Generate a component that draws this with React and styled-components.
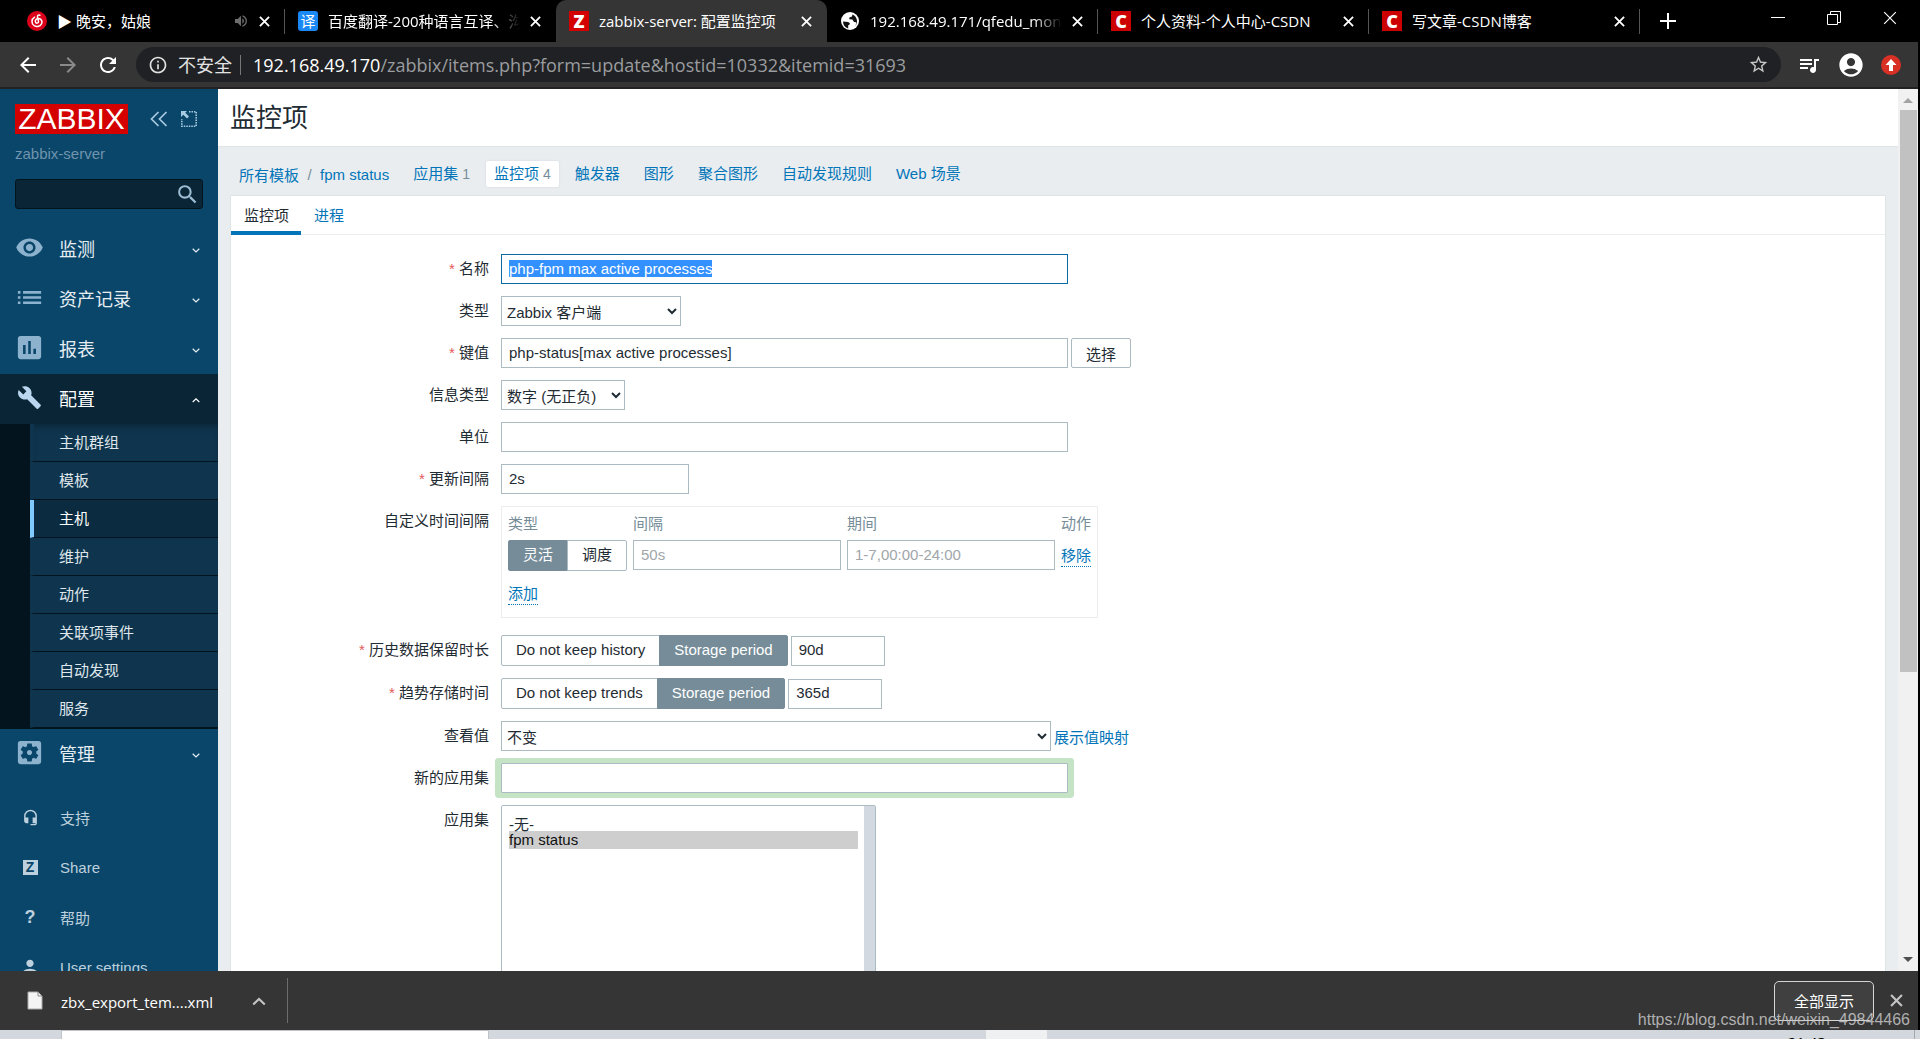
import React, { useEffect, useRef } from 'react';
import styled, { createGlobalStyle, css } from 'styled-components';
import {
  MdArrowBack,
  MdArrowForward,
  MdRefresh,
  MdInfoOutline,
  MdStarBorder,
  MdQueueMusic,
  MdAccountCircle,
  MdVolumeUp,
  MdSearch,
  MdVisibility,
  MdList,
  MdInsertChart,
  MdBuild,
  MdSettingsApplications,
  MdHeadsetMic,
  MdPerson,
} from 'react-icons/md';

const browserFont = "'Open Sans', 'Noto Sans CJK SC', sans-serif";
const pageFont = "'Liberation Sans', 'Noto Sans CJK SC', sans-serif";

const tabs = [
  { icon: 'music', title: '▶ 晚安，姑娘', muted: true, line: true },
  { icon: 'fanyi', title: '百度翻译-200种语言互译、沟', fade: true },
  { icon: 'zabbix', title: 'zabbix-server: 配置监控项', active: true },
  { icon: 'globe', title: '192.168.49.171/qfedu_mon', fade: true, line: true },
  { icon: 'csdn', title: '个人资料-个人中心-CSDN', line: true },
  { icon: 'csdn', title: '写文章-CSDN博客', line: true },
];

const subMenu = ['主机群组', '模板', '主机', '维护', '动作', '关联项事件', '自动发现', '服务'];

const crumbs = [
  { text: '应用集', count: 1 },
  { text: '监控项', count: 4, active: true },
  { text: '触发器' },
  { text: '图形' },
  { text: '聚合图形' },
  { text: '自动发现规则' },
  { text: 'Web 场景' },
];

const Cross = ({ size = 11, width = 2 }) => (
  <svg width={size} height={size} viewBox="0 0 12 12" fill="none" stroke="currentColor" strokeWidth={width}>
    <path d="M1 1L11 11M11 1L1 11" />
  </svg>
);

const Chevron = ({ up, size = 8, width = 1.2 }) => (
  <svg width={size} height={size} viewBox="0 0 8 8" fill="none" stroke="currentColor" strokeWidth={width}>
    <path d={up ? 'M0.7 6L4 2.8L7.3 6' : 'M0.7 2.8L4 6L7.3 2.8'} />
  </svg>
);

const Favicon = ({ name }) => {
  if (name === 'music') {
    return (
      <svg width="20" height="20" viewBox="0 0 20 20">
        <circle cx="10" cy="10" r="10" fill="#dd001b" />
        <path
          d="M13 4.2C11.2 3.4 10.2 4.6 10.5 6.2L11.5 10.4C11.9 12.4 8.6 12.9 8.3 10.7C8.1 8.7 9.8 7.6 11.5 7.6C14.3 7.8 15.6 10.2 14.7 12.5C13.6 15.3 9.9 16.3 7.2 14.7C4.2 12.8 4.1 8.2 7.6 6.2"
          fill="none"
          stroke="#fff"
          strokeWidth="1.5"
          strokeLinecap="round"
        />
      </svg>
    );
  }
  if (name === 'globe') {
    return (
      <svg width="20" height="20" viewBox="0 0 20 20">
        <circle cx="10" cy="10" r="9" fill="#fff" />
        <path
          d="M3 10.5L8 11C9.5 11.5 10.3 12.4 9.6 13.6L8.2 14.2V17.4C5 16.6 3 14 3 10.5ZM10 3L12.5 3.4L12 5.6L9.4 6.6L9.2 8.2L12.4 8.6L14 11L16.2 11.2C16.6 13.4 15 15.6 13.6 16.2C16 14.8 17.2 12.4 17 9.8C16.8 6 13.8 3 10 3Z"
          fill="#111"
        />
      </svg>
    );
  }
  if (name === 'fanyi') return <Badge $bg="#1a88f5" $round>译</Badge>;
  if (name === 'zabbix') return <Badge $bg="#d40000" $bold>Z</Badge>;
  return <Badge $bg="#cc0000" $bold>C</Badge>;
};

const BrowserTop = () => (
  <header>
    <TabStrip>
      {tabs.map((tab) => (
        <Tab key={tab.title} $active={tab.active} $line={tab.line}>
          <Favicon name={tab.icon} />
          <TabTitle $fade={tab.fade}>{tab.title}</TabTitle>
          {tab.muted && <MdVolumeUp size={16} color="#6d6d6d" />}
          <PlainButton aria-label="关闭标签页">
            <Cross />
          </PlainButton>
        </Tab>
      ))}
      <NewTab aria-label="新标签页">
        <svg width="16" height="16" viewBox="0 0 16 16" stroke="#fff" strokeWidth="2">
          <path d="M8 0V16M0 8H16" />
        </svg>
      </NewTab>
      <WindowButtons>
        <PlainButton aria-label="最小化">
          <svg width="14" height="14" stroke="#fff">
            <path d="M0 6.5H14" />
          </svg>
        </PlainButton>
        <PlainButton aria-label="还原">
          <svg width="14" height="14" fill="none" stroke="#fff">
            <path d="M0.5 3.5H10.5V13.5H0.5ZM3.5 3V0.5H13.5V11.5H11" />
          </svg>
        </PlainButton>
        <PlainButton aria-label="关闭">
          <Cross size={14} width={1} />
        </PlainButton>
      </WindowButtons>
    </TabStrip>
    <Toolbar>
      <PlainButton aria-label="后退">
        <MdArrowBack size={24} />
      </PlainButton>
      <PlainButton aria-label="前进" $dim>
        <MdArrowForward size={24} />
      </PlainButton>
      <PlainButton aria-label="刷新">
        <MdRefresh size={24} />
      </PlainButton>
      <Omnibox>
        <MdInfoOutline size={20} />
        <Insecure>不安全</Insecure>
        <Url>
          <b>192.168.49.170</b>/zabbix/items.php?form=update&amp;hostid=10332&amp;itemid=31693
        </Url>
        <MdStarBorder size={21} color="#c8c8c8" />
      </Omnibox>
      <PlainButton aria-label="媒体控制">
        <MdQueueMusic size={24} />
      </PlainButton>
      <PlainButton aria-label="用户">
        <MdAccountCircle size={28} />
      </PlainButton>
      <UpdateButton aria-label="更新">
        <svg width="12" height="12" viewBox="0 0 12 12">
          <path d="M6 0L11.5 6H8V12H4V6H0.5Z" fill="#fff" />
        </svg>
      </UpdateButton>
    </Toolbar>
  </header>
);

const MenuRow = ({ icon, text, open }) => (
  <MenuLink href="#" $open={open}>
    <IconCell>{icon}</IconCell>
    <span>{text}</span>
    <Chevron up={open} />
  </MenuLink>
);

const Sidebar = () => (
  <Side>
    <SideHead>
      <LogoRow>
        <Logo href="#">ZABBIX</Logo>
        <SideButton aria-label="收起侧栏">
          <svg width="18" height="16" viewBox="0 0 18 16" fill="none" stroke="currentColor" strokeWidth="1.7">
            <path d="M8.5 1L1.5 8L8.5 15M16.5 1L9.5 8L16.5 15" />
          </svg>
        </SideButton>
        <SideButton aria-label="隐藏侧栏">
          <svg width="16" height="16" viewBox="0 0 16 16">
            <path d="M8 .8H15.2V15.2H.8V8" fill="none" stroke="currentColor" strokeWidth="1.6" strokeDasharray="1.5 1" />
            <path d="M0 0H6L4.3 1.8L8 5.5L6 7.4L2.3 3.7L0 6Z" fill="currentColor" />
          </svg>
        </SideButton>
      </LogoRow>
      <ServerName>zabbix-server</ServerName>
      <SearchBox>
        <input type="search" aria-label="搜索" />
        <MdSearch size={25} />
      </SearchBox>
    </SideHead>
    <nav>
      <MenuRow icon={<MdVisibility size={29} />} text="监测" />
      <MenuRow icon={<MdList size={31} />} text="资产记录" />
      <MenuRow icon={<MdInsertChart size={31} />} text="报表" />
      <MenuRow icon={<MdBuild size={25} />} text="配置" open />
      <SubMenu>
        {subMenu.map((item) => (
          <SubLink key={item} href="#" $active={item === '主机'}>
            {item}
          </SubLink>
        ))}
      </SubMenu>
      <MenuRow icon={<MdSettingsApplications size={31} />} text="管理" />
    </nav>
    <UserMenu>
      <UserLink href="#">
        <IconCell><MdHeadsetMic size={17} /></IconCell>支持
      </UserLink>
      <UserLink href="#">
        <IconCell><ShareMark>Z</ShareMark></IconCell>Share
      </UserLink>
      <UserLink href="#">
        <IconCell><HelpMark>?</HelpMark></IconCell>帮助
      </UserLink>
      <UserLink href="#">
        <IconCell><MdPerson size={22} /></IconCell>User settings
      </UserLink>
    </UserMenu>
  </Side>
);

const Field = ({ id, label, required, tall, children }) => (
  <>
    <Label htmlFor={id} $required={required}>
      {label}
    </Label>
    <Control $tall={tall}>{children}</Control>
  </>
);

const Segment = ({ name, options, checked, firstId }) => (
  <SegmentBox>
    {options.map((option, i) => (
      <label key={option}>
        <input type="radio" id={i === 0 ? firstId : undefined} name={name} defaultChecked={option === checked} />
        <span>{option}</span>
      </label>
    ))}
  </SegmentBox>
);

const ItemForm = () => {
  const nameRef = useRef(null);

  useEffect(() => {
    nameRef.current.focus();
    nameRef.current.select();
  }, []);

  return (
    <Form>
      <Field id="name" label="名称" required>
        <Input id="name" ref={nameRef} $width={567} defaultValue="php-fpm max active processes" />
      </Field>
      <Field id="type" label="类型">
        <Select id="type" $width={180}>
          <option>Zabbix 客户端</option>
        </Select>
      </Field>
      <Field id="key" label="键值" required>
        <Input id="key" $width={567} defaultValue="php-status[max active processes]" />
        <PickButton type="button">选择</PickButton>
      </Field>
      <Field id="value_type" label="信息类型">
        <Select id="value_type" $width={124}>
          <option>数字 (无正负)</option>
        </Select>
      </Field>
      <Field id="units" label="单位">
        <Input id="units" $width={567} />
      </Field>
      <Field id="delay" label="更新间隔" required>
        <Input id="delay" $width={188} defaultValue="2s" />
      </Field>
      <Field id="flex_type" label="自定义时间间隔">
        <IntervalTable>
          <thead>
            <tr>
              <th>类型</th>
              <th>间隔</th>
              <th>期间</th>
              <th>动作</th>
            </tr>
          </thead>
          <tbody>
            <tr>
              <td>
                <Segment name="flex" firstId="flex_type" options={['灵活', '调度']} checked="灵活" />
              </td>
              <td>
                <Input $width={208} placeholder="50s" aria-label="间隔" />
              </td>
              <td>
                <Input $width={208} placeholder="1-7,00:00-24:00" aria-label="期间" />
              </td>
              <td>
                <DottedButton type="button">移除</DottedButton>
              </td>
            </tr>
            <tr>
              <td colSpan={4}>
                <DottedButton type="button">添加</DottedButton>
              </td>
            </tr>
          </tbody>
        </IntervalTable>
      </Field>
      <Field id="history_mode" label="历史数据保留时长" required tall>
        <Segment
          name="history"
          firstId="history_mode"
          options={['Do not keep history', 'Storage period']}
          checked="Storage period"
        />
        <Input $width={94} defaultValue="90d" aria-label="历史数据保留时长" />
      </Field>
      <Field id="trends_mode" label="趋势存储时间" required tall>
        <Segment
          name="trends"
          firstId="trends_mode"
          options={['Do not keep trends', 'Storage period']}
          checked="Storage period"
        />
        <Input $width={94} defaultValue="365d" aria-label="趋势存储时间" />
      </Field>
      <Field id="valuemap" label="查看值">
        <Select id="valuemap" $width={550}>
          <option>不变</option>
        </Select>
        <a href="#">展示值映射</a>
      </Field>
      <Field id="new_app" label="新的应用集">
        <Input id="new_app" $width={567} $halo />
      </Field>
      <Field id="apps" label="应用集">
        <ListFrame>
          <select id="apps" multiple defaultValue={['fpm']}>
            <option value="none">-无-</option>
            <option value="fpm">fpm status</option>
          </select>
          <ListTrack />
        </ListFrame>
      </Field>
    </Form>
  );
};

const DownloadBar = () => (
  <Downloads>
    <FileItem>
      <svg width="16" height="20" viewBox="0 0 16 20">
        <path d="M1 1H11L15 5V18H1Z" fill="#f4f4f4" stroke="#a9a9a9" />
        <path d="M11 1V5H15" fill="none" stroke="#8a8a8a" />
      </svg>
      <span>zbx_export_tem....xml</span>
      <PlainButton aria-label="更多操作" $dim="#c4c4c4">
        <Chevron up size={14} />
      </PlainButton>
    </FileItem>
    <ShowAll>全部显示</ShowAll>
    <PlainButton aria-label="关闭下载栏" $dim="#c4c4c4">
      <Cross size={13} />
    </PlainButton>
    <Watermark>https://blog.csdn.net/weixin_49844466</Watermark>
  </Downloads>
);

const App = () => (
  <Screen>
    <GlobalStyle />
    <BrowserTop />
    <Viewport>
      <Sidebar />
      <Main>
        <PageHead>
          <h1>监控项</h1>
        </PageHead>
        <Content>
          <Crumbs>
            <a href="#">所有模板</a>
            <i>/</i>
            <a href="#">fpm status</a>
            <CrumbList>
              {crumbs.map((item) => (
                <Crumb key={item.text} $active={item.active}>
                  <a href="#">{item.text}</a>
                  {item.count && <sup>{item.count}</sup>}
                </Crumb>
              ))}
            </CrumbList>
          </Crumbs>
          <Card>
            <CardTabs>
              <CardTab href="#" $active>监控项</CardTab>
              <CardTab href="#">进程</CardTab>
            </CardTabs>
            <ItemForm />
          </Card>
        </Content>
      </Main>
      <ScrollBar>
        <svg width="10" height="5"><path d="M5 0L10 5H0Z" fill="#a3a3a3" /></svg>
        <ScrollThumb />
        <svg width="10" height="5"><path d="M0 0H10L5 5Z" fill="#505050" /></svg>
      </ScrollBar>
    </Viewport>
    <DownloadBar />
    <Taskbar>
      <TaskSearch />
      <TaskActive />
      <Clock>21:43</Clock>
    </Taskbar>
  </Screen>
);

const GlobalStyle = createGlobalStyle`
  * {
    box-sizing: border-box;
  }
  body {
    margin: 0;
    background: #000;
  }
  button, input, select {
    font: inherit;
    color: inherit;
    margin: 0;
  }
  a {
    text-decoration: none;
    color: #0275b8;
  }
  svg {
    display: block;
    flex: none;
  }
`;

const Screen = styled.div`
  height: 100vh;
  display: flex;
  flex-direction: column;
  overflow: hidden;
  font-family: ${browserFont};
`;

const PlainButton = styled.button`
  display: flex;
  padding: 0;
  border: 0;
  background: none;
  color: ${({ $dim }) => ($dim ? ($dim === true ? '#8a8a8a' : $dim) : '#fff')};
`;

const TabStrip = styled.div`
  display: flex;
  align-items: center;
  height: 42px;
  padding-left: 14px;
  background: #000;
  color: #fff;
  font-size: 15px;
`;

const Tab = styled.div`
  position: relative;
  flex: 0 1 271px;
  min-width: 0;
  height: 42px;
  display: flex;
  align-items: center;
  gap: 10px;
  padding: 0 15px 0 13px;
  ${({ $active }) =>
    $active &&
    css`
      background: #353535;
      border-radius: 10px 10px 0 0;
    `}
  ${({ $line }) =>
    $line &&
    css`
      &::after {
        content: '';
        position: absolute;
        right: 0;
        top: 9px;
        width: 1px;
        height: 25px;
        background: #555;
      }
    `}
`;

const TabTitle = styled.span`
  flex: 1;
  min-width: 0;
  overflow: hidden;
  white-space: nowrap;
  line-height: 24px;
  ${({ $fade }) => $fade && 'mask-image: linear-gradient(to right, #000 85%, transparent);'}
`;

const Badge = styled.span`
  flex: none;
  width: 20px;
  height: 20px;
  display: flex;
  align-items: center;
  justify-content: center;
  background: ${({ $bg }) => $bg};
  border-radius: ${({ $round }) => ($round ? '3px' : '0')};
  color: #fff;
  font-size: ${({ $bold }) => ($bold ? '18px' : '15px')};
  font-weight: ${({ $bold }) => ($bold ? '800' : '400')};
  line-height: 20px;
`;

const NewTab = styled(PlainButton)`
  margin-left: 20px;
`;

const WindowButtons = styled.div`
  display: flex;
  gap: 42px;
  margin-left: auto;
  padding: 0 23px 6px 0;
`;

const Toolbar = styled.div`
  display: flex;
  align-items: center;
  height: 47px;
  margin-right: 2px;
  padding: 0 17px 0 16px;
  gap: 16px;
  background: #353535;
  border-bottom: 2px solid #222;
`;

const Omnibox = styled.div`
  flex: 1;
  height: 35px;
  display: flex;
  align-items: center;
  padding: 0 12px;
  border-radius: 18px;
  background: #202124;
  color: #e3e3e3;
  font-size: 18px;
`;

const Insecure = styled.span`
  margin: 0 12px 0 10px;
  padding-right: 8px;
  border-right: 1px solid #777;
  line-height: 20px;
`;

const Url = styled.span`
  flex: 1;
  color: #9a9c9f;
  b {
    font-weight: 400;
    color: #fff;
  }
`;

const UpdateButton = styled(PlainButton)`
  width: 20px;
  height: 20px;
  align-items: center;
  justify-content: center;
  border-radius: 50%;
  background: #d93025;
`;

const Viewport = styled.div`
  flex: 1;
  min-height: 0;
  display: flex;
  margin-right: 2px;
  overflow: hidden;
  background: #e9edf0;
  font-family: ${pageFont};
  font-size: 15px;
  color: #1f2c33;
`;

const Side = styled.aside`
  flex: 0 0 218px;
  overflow: hidden;
  background: #0a466a;
`;

const SideHead = styled.div`
  height: 135px;
  padding: 15px 15px 0;
`;

const LogoRow = styled.div`
  display: flex;
  align-items: center;
  gap: 13px;
  height: 30px;
`;

const Logo = styled.a`
  flex: none;
  width: 113px;
  height: 30px;
  margin-right: 9px;
  background: #d40000;
  color: #fff;
  font-size: 30px;
  line-height: 30px;
  text-align: center;
`;

const SideButton = styled(PlainButton)`
  color: #a9cbe2;
`;

const ServerName = styled.div`
  margin-top: 10px;
  line-height: 20px;
  color: #6f94ad;
`;

const SearchBox = styled.div`
  display: flex;
  align-items: center;
  height: 30px;
  margin-top: 15px;
  padding-right: 2px;
  border: 1px solid #04141f;
  border-radius: 3px;
  background: #0a2536;
  color: #9cbdd3;
  input {
    flex: 1;
    min-width: 0;
    border: 0;
    background: none;
    outline: 0;
  }
`;

const IconCell = styled.span`
  flex: 0 0 59px;
  display: flex;
  justify-content: center;
`;

const MenuLink = styled.a`
  display: flex;
  align-items: center;
  height: 50px;
  padding: 0 18px 3px 0;
  color: #e6eef3;
  font-size: 18px;
  > span:nth-child(2) {
    flex: 1;
  }
  > svg {
    margin-top: 4px;
  }
  ${IconCell} {
    color: #8db2cd;
  }
  ${({ $open }) =>
    $open &&
    css`
      background: #0a2536;
      color: #fff;
      ${IconCell} {
        color: #b9d6ee;
      }
    `}
`;

const SubMenu = styled.div`
  padding: 0 0 1px 30px;
  background: #04141f;
`;

const SubLink = styled.a`
  display: block;
  height: 38px;
  padding-left: 25px;
  border-left: 4px solid ${({ $active }) => ($active ? '#7fcaff' : '#0f344d')};
  border-bottom: 1px solid #04141f;
  background: ${({ $active }) => ($active ? '#0a2b40' : '#0f344d')};
  color: ${({ $active }) => ($active ? '#fff' : '#dfe7ec')};
  line-height: 37px;
  &:first-child {
    box-shadow: inset 0 6px 6px -4px #0a2536;
  }
`;

const UserMenu = styled.div`
  margin-top: 13px;
`;

const UserLink = styled.a`
  display: flex;
  align-items: center;
  height: 50px;
  color: #bdd0dd;
  ${IconCell} {
    flex-basis: 60px;
  }
`;

const ShareMark = styled.span`
  width: 15px;
  background: #bdd0dd;
  color: #0a466a;
  font-size: 14px;
  font-weight: 700;
  line-height: 15px;
  text-align: center;
`;

const HelpMark = styled.span`
  font-size: 18px;
  font-weight: 700;
`;

const Main = styled.main`
  flex: 1;
  min-width: 0;
`;

const PageHead = styled.div`
  height: 58px;
  padding-left: 12px;
  border-bottom: 1px solid #dfe4e7;
  background: #fff;
  h1 {
    margin: 0;
    font-size: 26px;
    font-weight: 400;
    line-height: 58px;
  }
`;

const Content = styled.div`
  padding: 14px 12px 0;
`;

const Crumbs = styled.div`
  display: flex;
  align-items: center;
  height: 26px;
  padding-left: 9px;
  i {
    width: 21px;
    font-style: normal;
    text-align: center;
    color: #768d99;
  }
`;

const CrumbList = styled.ul`
  display: flex;
  gap: 8px;
  margin: 0 0 0 16px;
  padding: 0;
  list-style: none;
`;

const Crumb = styled.li`
  height: 26px;
  padding: 0 8px;
  line-height: 26px;
  border-radius: 2px;
  ${({ $active }) =>
    $active &&
    css`
      background: #fff;
      box-shadow: 0 0 2px #ccd5d9;
    `}
  sup {
    margin-left: 4px;
    font-size: 14px;
    line-height: 26px;
    vertical-align: baseline;
    color: #768d99;
  }
`;

const Card = styled.section`
  height: 1200px;
  margin-top: 8px;
  border: 1px solid #dfe4e7;
  background: #fff;
`;

const CardTabs = styled.nav`
  display: flex;
  height: 39px;
  border-bottom: 1px solid #ebeef0;
`;

const CardTab = styled.a`
  height: 39px;
  padding: 0 12px 0 13px;
  line-height: 39px;
  ${({ $active }) =>
    $active &&
    css`
      border-bottom: 4px solid #0275b8;
      color: #1f2c33;
    `}
`;

const Form = styled.form`
  display: grid;
  grid-template-columns: 258px 1fr;
  gap: 12px;
  padding-top: 19px;
`;

const Label = styled.label`
  text-align: right;
  line-height: 29px;
  ${({ $required }) =>
    $required &&
    css`
      &::before {
        content: '* ';
        color: #e45959;
      }
    `}
`;

const Control = styled.div`
  display: flex;
  align-items: center;
  align-self: start;
  gap: 3px;
  min-height: ${({ $tall }) => ($tall ? 31 : 30)}px;
`;

const Input = styled.input`
  width: ${({ $width }) => $width}px;
  height: 30px;
  padding: 0 7px 2px;
  border: 1px solid #acbbc2;
  background: #fff;
  outline: 0;
  ${({ $halo }) => $halo && 'box-shadow: 1px 0 0 5px #c5e4c6, -1px 0 0 5px #c5e4c6; border-radius: 1px;'}
  &:focus {
    border-color: #0a6aa1;
  }
  &::placeholder {
    color: #a0a6a9;
  }
  &::selection {
    background: #3390ff;
    color: #fff;
  }
`;

const Select = styled.select`
  width: ${({ $width }) => $width}px;
  height: 30px;
  padding: 2px 1px 0;
  border: 1px solid #acbbc2;
  border-radius: 0;
  background: #fff;
`;

const PickButton = styled.button`
  height: 30px;
  padding: 0 14px;
  border: 1px solid #acbbc2;
  border-radius: 2px;
  background: #fff;
`;

const SegmentBox = styled.div`
  display: inline-flex;
  vertical-align: top;
  label {
    position: relative;
  }
  label + label {
    margin-left: -1px;
  }
  input {
    position: absolute;
    opacity: 0;
  }
  span {
    display: block;
    height: 31px;
    padding: 0 14px;
    border: 1px solid #acbbc2;
    border-radius: 0 2px 2px 0;
    line-height: 28px;
    white-space: nowrap;
  }
  label:first-child span {
    border-radius: 2px 0 0 2px;
  }
  input:checked + span {
    border-color: #768d99;
    background: #768d99;
    color: #fff;
  }
`;

const IntervalTable = styled.table`
  margin-bottom: 5px;
  border: 1px solid #ebeef0;
  border-spacing: 0;
  th,
  td {
    height: 31px;
    padding: 0 0 0 6px;
    vertical-align: top;
    text-align: left;
  }
  th {
    height: 33px;
    padding-bottom: 2px;
    vertical-align: middle;
    font-weight: 400;
    color: #768d99;
  }
  td:last-child {
    padding-right: 6px;
  }
  tr:last-child td[colspan] {
    height: 46px;
    vertical-align: middle;
  }
  td > button {
    margin-top: 6px;
  }
  td[colspan] > button {
    margin: 0;
  }
`;

const DottedButton = styled.button`
  display: block;
  padding: 0;
  border: 0;
  border-bottom: 1px dotted #0275b8;
  background: none;
  color: #0275b8;
  line-height: 20px;
`;

const ListFrame = styled.div`
  display: flex;
  width: 375px;
  height: 260px;
  border: 1px solid #acbbc2;
  border-radius: 2px;
  select {
    flex: 1;
    min-width: 0;
    padding: 7px 6px 7px 7px;
    border: 0;
    outline: 0;
    background: #fff;
    overflow: hidden;
  }
  option {
    height: 18px;
    min-height: 18px;
    padding: 0;
    line-height: 18px;
  }
  option:checked {
    background: #cecece linear-gradient(#cecece, #cecece);
  }
`;

const ListTrack = styled.div`
  flex: 0 0 11px;
  background: #d2d9e0;
`;

const ScrollBar = styled.div`
  flex: 0 0 20px;
  display: flex;
  flex-direction: column;
  align-items: center;
  justify-content: space-between;
  padding: 9px 0;
  background: #f1f1f1;
`;

const ScrollThumb = styled.div`
  width: 17px;
  height: 65%;
  margin: 7px 0 auto;
  background: #c1c1c1;
`;

const Downloads = styled.footer`
  position: relative;
  display: flex;
  align-items: center;
  height: 59px;
  margin-right: 2px;
  padding-right: 15px;
  background: #353535;
  color: #fff;
  font-size: 15px;
`;

const FileItem = styled.div`
  display: flex;
  align-items: center;
  width: 288px;
  height: 45px;
  padding: 0 21px 0 27px;
  margin-right: auto;
  border-right: 1px solid #6d6d6d;
  span {
    flex: 1;
    margin-left: 18px;
    padding-top: 3px;
  }
`;

const ShowAll = styled.button`
  width: 100px;
  height: 40px;
  margin-right: 16px;
  border: 1px solid #d5d5d5;
  border-radius: 5px;
  background: #404040;
`;

const Watermark = styled.span`
  position: absolute;
  right: 8px;
  bottom: 0;
  color: rgba(200, 200, 200, 0.85);
  font-family: ${pageFont};
  font-size: 16px;
  line-height: 20px;
`;

const Taskbar = styled.div`
  display: flex;
  height: 9px;
  flex: none;
  overflow: hidden;
  padding-left: 61px;
  background: #d3d8df;
`;

const TaskSearch = styled.div`
  width: 428px;
  border: 1px solid #bfc2c6;
  border-bottom: 0;
  background: #fff;
`;

const TaskActive = styled.div`
  width: 61px;
  margin-left: 497px;
  background: #eef0f2;
`;

const Clock = styled.time`
  margin-left: auto;
  padding: 4px 88px 0 0;
  border-right: 1px solid #a5a8ad;
  margin-right: 5px;
  color: #000;
  font-size: 15px;
  line-height: 16px;
`;

export default App;
